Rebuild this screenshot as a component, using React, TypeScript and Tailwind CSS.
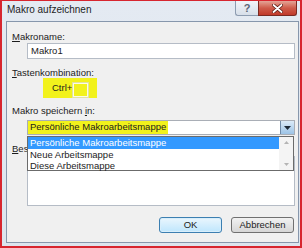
import React from "react";

const font = "font-['Liberation_Sans',Arial,sans-serif]";

function TitleButtons() {
  return (
    <div className="flex h-[15px] mr-[3px]">
      <div className="flex w-[23px] items-center justify-center rounded-bl-[3px] border border-t-0 border-r-0 border-[#8d9cb0] bg-gradient-to-b from-[#f2f5f9] to-[#d7dfe9] text-[11px] font-bold leading-none text-[#5a6576]">
        ?
      </div>
      <div className="flex w-[39px] items-center justify-center rounded-br-[3px] border border-t-0 border-[#7a2a22] bg-gradient-to-b from-[#e3a497] via-[#cf5b4a] to-[#c0392a] text-[11px] font-bold leading-none text-white">
        <svg width="11" height="9" viewBox="0 0 11 9">
          <path d="M1.5 1 L9.5 8 M9.5 1 L1.5 8" stroke="#5a1a12" strokeWidth="3.4" strokeLinecap="round" />
          <path d="M1.5 1 L9.5 8 M9.5 1 L1.5 8" stroke="#ffffff" strokeWidth="1.8" strokeLinecap="round" />
        </svg>
      </div>
    </div>
  );
}

function Label({ pre, key1, post }: { pre: string; key1: string; post: string }) {
  return (
    <p className="pl-[5px] text-[9.5px] leading-[11px]">
      {pre}
      <span className="underline underline-offset-1">{key1}</span>
      {post}
    </p>
  );
}

export default function App() {
  return (
    <div
      className={`${font} flex h-[248px] w-[302px] flex-col border-2 border-t border-[#d7262f] bg-gradient-to-b from-[#e4eaf2] to-[#dde5ee] text-[#1c1c1c]`}
    >
      <div className="flex h-[20px] items-start justify-between">
        <span className="pl-[5px] pt-[3px] text-[10px] leading-[12px] text-[#1e1e1e]">
          Makro aufzeichnen
        </span>
        <TitleButtons />
      </div>

      <div className="ml-[4px] mr-[1px] flex h-[222px] flex-col border border-[#8797ac] bg-[#f0f0f0] pt-[9px]">
        <Label pre="" key1="M" post="akroname:" />
        <div className="ml-[20px] mr-[3px] mt-[1px] flex h-[16px] items-center border border-[#b5bcc6] bg-white pl-[3px] text-[9.5px]">
          Makro1
        </div>

        <div className="mt-[8px]">
          <Label pre="" key1="T" post="astenkombination:" />
        </div>
        <div className="ml-[36px] flex h-[20px] w-[54px] items-center bg-[#f2f21c] pl-[9px] text-[9.5px]">
          <span>Ctrl+</span>
          <div className="ml-[1px] mt-[3px] h-[14px] w-[15px] border border-[#fbfbe6] bg-[#f2f21c] shadow-[0_0_0_1px_#e2e2a0]" />
        </div>

        <div className="mt-[7px]">
          <Label pre="Makro speichern " key1="i" post="n:" />
        </div>
        <div className="relative ml-[20px] mr-[3px] mt-[4px]">
          <div className="flex h-[15px] border border-[#a9aeb6] bg-white">
            <div className="flex w-[140px] items-center bg-[#f2f21c] pl-[2px] text-[9.5px]">
              Persönliche Makroarbeitsmappe
            </div>
            <div className="flex-1" />
            <div className="flex w-[14px] items-center justify-center border-l border-[#6f8aa8] bg-gradient-to-b from-[#dcebf8] to-[#9cc3e6]">
              <svg width="7" height="4" viewBox="0 0 7 4">
                <path d="M0 0 H7 L3.5 4 Z" fill="#1d2a38" />
              </svg>
            </div>
          </div>

          <div className="absolute left-0 right-[1px] top-[16px] z-10 flex h-[35px] border border-[#6b6b6b] bg-white text-[9.5px] leading-[11px]">
            <div className="flex-1">
              <div className="h-[12px] bg-[#3399ff] pl-[2px] text-white">Persönliche Makroarbeitsmappe</div>
              <div className="h-[11px] pl-[2px]">Neue Arbeitsmappe</div>
              <div className="h-[10px] pl-[2px]">Diese Arbeitsmappe</div>
            </div>
            <div className="flex w-[14px] flex-col items-center justify-between bg-[#f4f4f4] py-[4px]">
              <svg width="5" height="3" viewBox="0 0 5 3">
                <path d="M0 3 H5 L2.5 0 Z" fill="#b4b4b4" />
              </svg>
              <svg width="5" height="3" viewBox="0 0 5 3">
                <path d="M0 0 H5 L2.5 3 Z" fill="#b4b4b4" />
              </svg>
            </div>
          </div>
        </div>

        <div className="mt-[8px]">
          <Label pre="" key1="B" post="eschreibung:" />
        </div>
        <div className="ml-[20px] mr-[3px] mt-[2px] h-[50px] border border-[#b5bcc6] bg-white" />

        <div className="mr-[4px] mt-[11px] flex justify-end gap-[9px] text-[9.5px]">
          <button className="h-[16px] w-[63px] rounded-[3px] border border-[#3c7fb1] bg-gradient-to-b from-[#eaf6fd] to-[#bee6fd] shadow-[inset_0_0_0_1px_#d8eefb]">
            OK
          </button>
          <button className="h-[16px] w-[63px] rounded-[3px] border border-[#707070] bg-gradient-to-b from-[#f2f2f2] to-[#d6d6d6]">
            Abbrechen
          </button>
        </div>
      </div>
    </div>
  );
}
